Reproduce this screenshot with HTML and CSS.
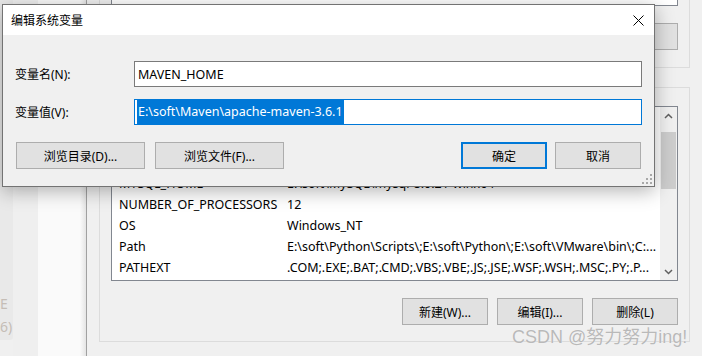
FILE: index.html
```html
<!DOCTYPE html>
<html lang="zh-CN">
<head>
    <meta charset="UTF-8">
    <title>编辑系统变量</title>
    <link rel="stylesheet" href="styles.css">
</head>
<body>
    <div class="desk">
        <!-- window underneath, on the left -->
        <div class="side-pane">
            <div class="side-strip">
                <div class="side-text">E</div>
                <div class="side-text">6)</div>
            </div>
            <div class="side-mid"></div>
            <div class="side-light"></div>
        </div>

        <!-- Environment variables window -->
        <div class="env-window">
            <div class="group group-user">
                <div class="list-user"></div>
                <div class="button-row">
                    <button class="win-btn"></button>
                    <button class="win-btn"></button>
                    <button class="win-btn"></button>
                </div>
            </div>

            <div class="group group-system">
                <div class="list-system">
                    <!-- list is scrolled; the upper rows sit under the dialog -->
                    <div class="list-body">
                        <div class="list-row"><span class="col-name">MYSQL_HOME</span><span>E:\soft\MySQL\mysql-8.0.21-winx64</span></div>
                        <div class="list-row"><span class="col-name">NUMBER_OF_PROCESSORS</span><span>12</span></div>
                        <div class="list-row"><span class="col-name">OS</span><span>Windows_NT</span></div>
                        <div class="list-row"><span class="col-name">Path</span><span>E:\soft\Python\Scripts\;E:\soft\Python\;E:\soft\VMware\bin\;C:...</span></div>
                        <div class="list-row"><span class="col-name">PATHEXT</span><span>.COM;.EXE;.BAT;.CMD;.VBS;.VBE;.JS;.JSE;.WSF;.WSH;.MSC;.PY;.P...</span></div>
                    </div>
                    <div class="scrollbar">
                        <div class="scroll-btn">
                            <svg width="9" height="6" viewBox="0 0 9 6"><polyline points="1,5 4.5,1.5 8,5" fill="none" stroke="#606060" stroke-width="1.5"/></svg>
                        </div>
                        <div class="scroll-track"><div class="scroll-thumb"></div></div>
                        <div class="scroll-btn">
                            <svg width="9" height="6" viewBox="0 0 9 6"><polyline points="1,1 4.5,4.5 8,1" fill="none" stroke="#606060" stroke-width="1.5"/></svg>
                        </div>
                    </div>
                </div>
                <div class="button-row">
                    <button class="win-btn">新建(W)...</button>
                    <button class="win-btn">编辑(I)...</button>
                    <button class="win-btn">删除(L)</button>
                </div>
            </div>
        </div>
    </div>

    <!-- Edit dialog -->
    <div class="dialog">
        <div class="dialog-title">
            <span>编辑系统变量</span>
            <svg class="close-icon" width="11" height="11" viewBox="0 0 11 11"><path d="M0.5 0.5 L10.5 10.5 M10.5 0.5 L0.5 10.5" stroke="#000" stroke-width="1" fill="none"/></svg>
        </div>
        <div class="dialog-body">
            <div class="field-row">
                <label class="field-label">变量名(N):</label>
                <div class="field-input">MAVEN_HOME</div>
            </div>
            <div class="field-row">
                <label class="field-label">变量值(V):</label>
                <div class="field-input focused"><span class="selection">E:\soft\Maven\apache-maven-3.6.1</span></div>
            </div>
            <div class="dialog-buttons">
                <div class="btn-group wide-group">
                    <button class="win-btn wide">浏览目录(D)...</button>
                    <button class="win-btn wide">浏览文件(F)...</button>
                </div>
                <div class="btn-group">
                    <button class="win-btn default">确定</button>
                    <button class="win-btn">取消</button>
                </div>
            </div>
        </div>
        <svg class="grip" width="10" height="10" viewBox="0 0 10 10" fill="#a8a8a8">
            <rect x="8" y="0" width="2" height="2"/>
            <rect x="4" y="4" width="2" height="2"/><rect x="8" y="4" width="2" height="2"/>
            <rect x="0" y="8" width="2" height="2"/><rect x="4" y="8" width="2" height="2"/><rect x="8" y="8" width="2" height="2"/>
        </svg>
    </div>

    <div class="watermark">CSDN @努力努力ing!</div>
</body>
</html>
```

FILE: styles.css
```css
* {
    box-sizing: border-box;
}

body {
    margin: 0;
    width: 702px;
    height: 356px;
    overflow: hidden;
    position: relative;
    background-color: #f0f0f0;
    font-family: "Noto Sans", "Noto Sans CJK SC", sans-serif;
    font-size: 12px;
    color: #000;
}

.desk {
    display: flex;
    height: 356px;
}

/* Left window */
.side-pane {
    display: flex;
    flex: 0 0 86px;
}

.side-strip {
    width: 13px;
    height: 340px;
    background-color: #e9e9e9;
    border-bottom-right-radius: 3px;
    display: flex;
    flex-direction: column;
    justify-content: flex-end;
    padding-bottom: 2px;
}

.side-text {
    white-space: nowrap;
    line-height: 23px;
    font-size: 14px;
    color: #c5bdb6;
}

.side-mid {
    width: 25px;
    background-color: #efefef;
}

.side-light {
    flex: 1;
    background: linear-gradient(to right, #fafafa 0, #fafafa 42px, #e4e4e4 100%);
}

/* Environment window */
.env-window {
    flex: 1;
    border-left: 1px solid #a0a0a0;
    padding: 0 12px;
    display: flex;
    flex-direction: column;
}

.group {
    border: 1px solid #dcdcdc;
    padding: 0 11px;
}

.group-user {
    border-top: 0;
    padding-bottom: 17px;
}

.list-user {
    height: 6px;
    background-color: #fff;
    border: 1px solid #828790;
    border-top: 0;
}

.group-system {
    margin-top: 19px;
    padding-top: 18px;
    padding-bottom: 16px;
}

.list-system {
    display: flex;
    height: 175px;
    background-color: #fff;
    border: 1px solid #828790;
}

.list-body {
    flex: 1;
    overflow: hidden;
    padding-top: 66px;
}

.list-row {
    display: flex;
    align-items: center;
    height: 21px;
    padding-left: 7px;
    white-space: nowrap;
    font-size: 12.5px;
}

.col-name {
    flex: 0 0 168px;
}

.scrollbar {
    width: 17px;
    background-color: #f0f0f0;
    display: flex;
    flex-direction: column;
}

.scroll-btn {
    height: 17px;
    display: flex;
    align-items: center;
    justify-content: center;
}

.scroll-track {
    flex: 1;
    padding: 8px 1px 0;
}

.scroll-thumb {
    height: 57px;
    background-color: #cdcdcd;
}

.button-row {
    display: flex;
    justify-content: flex-end;
    gap: 9px;
    margin-top: 17px;
}

.win-btn {
    width: 86px;
    height: 27px;
    padding: 0;
    background-color: #e1e1e1;
    border: 1px solid #adadad;
    font: inherit;
    color: #000;
}

.win-btn.wide {
    width: 129px;
}

.win-btn.default {
    border: 2px solid #0078d7;
}

/* Dialog */
.dialog {
    position: absolute;
    left: 2px;
    top: 4px;
    width: 653px;
    height: 183px;
    background-color: #f0f0f0;
    border: 1px solid #737373;
    box-shadow: 0 4px 18px rgba(0, 0, 0, 0.3);
}

.dialog-title {
    height: 30px;
    background-color: #fff;
    display: flex;
    align-items: center;
    justify-content: space-between;
    padding: 0 10px 0 8px;
}

.dialog-body {
    padding: 26px 12px 17px;
}

.field-row {
    display: flex;
    align-items: center;
    height: 26px;
}

.field-row + .field-row {
    margin-top: 12px;
}

.field-label {
    flex: 0 0 119px;
}

.field-input {
    flex: 1;
    height: 26px;
    display: flex;
    align-items: center;
    padding: 0 3px;
    background-color: #fff;
    border: 1px solid #7a7a7a;
    font-size: 12.5px;
    white-space: nowrap;
}

.field-input.focused {
    border-color: #0078d7;
    padding-left: 2px;
}

.selection {
    background-color: #0078d7;
    color: #fff;
    line-height: 24px;
    padding: 0 1px;
}

.dialog-buttons {
    display: flex;
    justify-content: space-between;
    margin: 17px 1px 0;
}

.btn-group {
    display: flex;
    gap: 8px;
}

.wide-group {
    gap: 10px;
}

.grip {
    position: absolute;
    right: 2px;
    bottom: 2px;
}

.watermark {
    position: absolute;
    left: 512px;
    top: 326px;
    font-family: "Liberation Sans", "Noto Sans CJK SC", sans-serif;
    font-size: 18px;
    line-height: 22px;
    color: #b9b9b9;
    text-shadow: 0 0 1px rgba(255, 255, 255, 0.8);
}
```
